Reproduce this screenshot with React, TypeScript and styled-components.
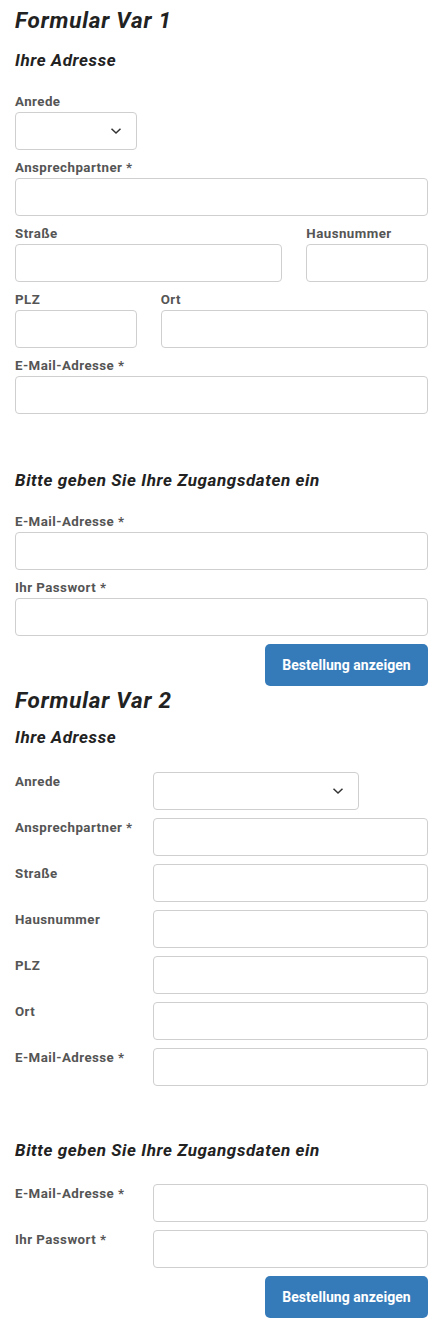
import React from "react";
import styled, { createGlobalStyle } from "styled-components";

const GlobalStyle = createGlobalStyle`
  html, body { margin: 0; padding: 0; background: #fff; }
  body { font-family: Roboto, "Noto Sans", Arial, sans-serif; color: #222; }
  * { box-sizing: border-box; }
`;

const Page = styled.div`
  padding: 7px 15px 0 15px;
  width: 443px;
`;

const Title = styled.h1<{ $mt?: number }>`
  margin: ${(p) => p.$mt ?? 0}px 0 0 0;
  font-size: 22.5px;
  line-height: 26px;
  font-weight: 700;
  font-style: italic;
  letter-spacing: 0.8px;
  color: #222;
`;

const SectionTitle = styled.h2<{ $mt: number; $mb: number }>`
  margin: ${(p) => p.$mt}px 0 ${(p) => p.$mb}px 0;
  font-size: 17px;
  line-height: 20px;
  font-weight: 700;
  font-style: italic;
  letter-spacing: 0.6px;
  color: #222;
`;

const StackGrid = styled.div`
  display: grid;
  grid-template-columns: repeat(3, 1fr);
  column-gap: 24px;
  row-gap: 8px;
`;

const Field = styled.div<{ $span?: number }>`
  grid-column: span ${(p) => p.$span ?? 3};
  display: flex;
  flex-direction: column;
`;

const HGrid = styled.div`
  display: grid;
  grid-template-columns: 122px 1fr;
  column-gap: 16px;
  row-gap: 8px;
`;

const Label = styled.label`
  display: block;
  font-size: 13.3px;
  line-height: 20px;
  font-weight: 700;
  letter-spacing: 0.45px;
  color: #555;
  white-space: nowrap;
`;

const Input = styled.input`
  display: block;
  width: 100%;
  height: 38px;
  border: 1px solid #cfcfcf;
  border-radius: 4px;
  background: #fff;
  padding: 0 10px;
  font: inherit;
`;

const SelectWrap = styled.div<{ $w: string }>`
  position: relative;
  width: ${(p) => p.$w};
  height: 38px;
`;

const SelectBox = styled.select`
  appearance: none;
  -webkit-appearance: none;
  width: 100%;
  height: 38px;
  border: 1px solid #cfcfcf;
  border-radius: 4px;
  background: #fff;
  padding: 0 10px;
  font: inherit;
`;

const Chevron = styled.svg`
  position: absolute;
  right: 15px;
  top: 15px;
  width: 12px;
  height: 8px;
  pointer-events: none;
`;

const ButtonRow = styled.div`
  display: flex;
  justify-content: flex-end;
  margin-top: 8px;
`;

const Button = styled.button`
  width: 163px;
  height: 42px;
  border: none;
  border-radius: 5px;
  background: #357bba;
  color: #fff;
  font-family: Roboto, Arial, sans-serif;
  font-size: 14px;
  font-weight: 700;
  letter-spacing: 0.05px;
  cursor: pointer;
`;

const Select: React.FC<{ w: string }> = ({ w }) => (
  <SelectWrap $w={w}>
    <SelectBox>
      <option></option>
    </SelectBox>
    <Chevron viewBox="0 0 12 8">
      <path d="M1.5 1.8 L6 6 L10.5 1.8" fill="none" stroke="#333" strokeWidth="1.5" />
    </Chevron>
  </SelectWrap>
);

const HRow: React.FC<{ label: string; children: React.ReactNode }> = ({ label, children }) => (
  <>
    <Label>{label}</Label>
    <div>{children}</div>
  </>
);

export default function App() {
  return (
    <Page>
      <GlobalStyle />
      <Title>Formular Var 1</Title>
      <SectionTitle $mt={17} $mb={22}>Ihre Adresse</SectionTitle>
      <StackGrid>
        <Field $span={3}>
          <Label>Anrede</Label>
          <Select w="calc((100% - 48px) / 3)" />
        </Field>
        <Field $span={3}>
          <Label>Ansprechpartner *</Label>
          <Input />
        </Field>
        <Field $span={2}>
          <Label>Straße</Label>
          <Input />
        </Field>
        <Field $span={1}>
          <Label>Hausnummer</Label>
          <Input />
        </Field>
        <Field $span={1}>
          <Label>PLZ</Label>
          <Input />
        </Field>
        <Field $span={2}>
          <Label>Ort</Label>
          <Input />
        </Field>
        <Field $span={3}>
          <Label>E-Mail-Adresse *</Label>
          <Input />
        </Field>
      </StackGrid>
      <SectionTitle $mt={56} $mb={22}>Bitte geben Sie Ihre Zugangsdaten ein</SectionTitle>
      <StackGrid>
        <Field $span={3}>
          <Label>E-Mail-Adresse *</Label>
          <Input />
        </Field>
        <Field $span={3}>
          <Label>Ihr Passwort *</Label>
          <Input type="password" />
        </Field>
      </StackGrid>
      <ButtonRow>
        <Button>Bestellung anzeigen</Button>
      </ButtonRow>

      <Title $mt={1}>Formular Var 2</Title>
      <SectionTitle $mt={14} $mb={25}>Ihre Adresse</SectionTitle>
      <HGrid>
        <HRow label="Anrede">
          <Select w="206px" />
        </HRow>
        <HRow label="Ansprechpartner *">
          <Input />
        </HRow>
        <HRow label="Straße">
          <Input />
        </HRow>
        <HRow label="Hausnummer">
          <Input />
        </HRow>
        <HRow label="PLZ">
          <Input />
        </HRow>
        <HRow label="Ort">
          <Input />
        </HRow>
        <HRow label="E-Mail-Adresse *">
          <Input />
        </HRow>
      </HGrid>
      <SectionTitle $mt={54} $mb={24}>Bitte geben Sie Ihre Zugangsdaten ein</SectionTitle>
      <HGrid>
        <HRow label="E-Mail-Adresse *">
          <Input />
        </HRow>
        <HRow label="Ihr Passwort *">
          <Input type="password" />
        </HRow>
      </HGrid>
      <ButtonRow>
        <Button>Bestellung anzeigen</Button>
      </ButtonRow>
    </Page>
  );
}
